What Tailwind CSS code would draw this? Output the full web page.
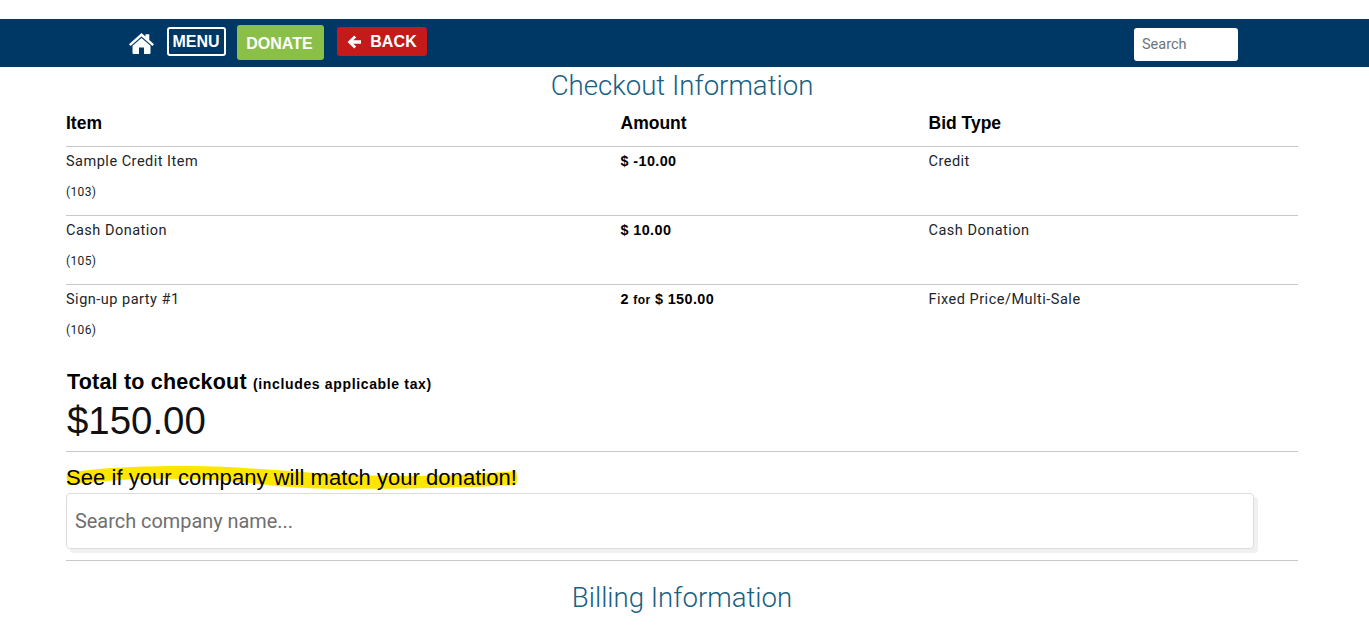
<!DOCTYPE html>
<html><head><meta charset="utf-8"><script src="https://cdn.jsdelivr.net/npm/@tailwindcss/browser@4"></script></head>
<body class="bg-white font-['Roboto',sans-serif] text-[#212529] overflow-hidden">
<div class="h-[630px] overflow-hidden pt-[19px]">
<nav class="h-[48px] bg-[#003865] flex items-center relative">
  <div class="flex items-center ml-[129px] font-['Liberation_Sans',sans-serif] font-bold text-white">
    <svg class="w-[25px] h-[21px]" viewBox="0 0 25 21" fill="#fff"><path d="M12.5 0 L16.5 3.6 V1.2 H20.3 V7 L25 11.2 L23.4 13 L12.5 3.4 L1.6 13 L0 11.2 Z"/><path d="M12.5 5 L21.5 12.8 V20 Q21.5 21 20.5 21 H15 V14.5 H10 V21 H4.5 Q3.5 21 3.5 20 V12.8 Z"/></svg>
    <span class="ml-[13px] w-[59px] h-[29px] -mt-[3px] border-2 border-white rounded-[3px] flex items-center justify-center text-[16px] pt-[1px] pr-[1px]">MENU</span>
    <span class="ml-[11px] w-[87px] h-[35px] -mt-[1px] bg-[#8bc048] rounded-[3px] flex items-center justify-center text-[16px] pt-[2px] pr-[2px]">DONATE</span>
    <span class="ml-[13px] w-[90px] h-[29px] bg-[#c41a1a] rounded-[3px] flex items-center justify-center text-[16px] gap-[9px] -mt-[3px] tracking-[0.1px]">
      <svg class="w-[14px] h-[14px]" viewBox="0 0 14 14" fill="#fff"><path d="M7.2 0.6 L9.2 2.6 L6.2 5.3 H14 V8.7 H6.2 L9.2 11.4 L7.2 13.4 L0.6 7 Z"/></svg>BACK</span>
  </div>
  <input placeholder="Search" class="absolute left-[1134px] top-[9px] w-[104px] h-[33px] bg-white rounded-[3px] px-[8px] text-[14.5px] placeholder:text-[#6c757d] outline-none">
</nav>
<main class="mx-[66px] w-[1232px]">
  <h2 class="text-center font-light text-[#176083] text-[27.6px] leading-[36px] mt-[1px]">Checkout Information</h2>
  <section>
    <div class="grid grid-cols-[554.5px_308px_1fr] h-[43px] pt-[7px] border-b border-[#c8c8c8] font-['Liberation_Sans',sans-serif] font-bold text-black text-[17.5px] leading-[24px]">
      <div>Item</div><div>Amount</div><div>Bid Type</div>
    </div>
    <div class="grid grid-cols-[554.5px_308px_1fr] h-[69px] pt-[5px] border-b border-[#c8c8c8] text-[14.5px] leading-[20px] tracking-[0.5px]">
      <div>Sample Credit Item<div class="text-[12px] mt-[10px] leading-[20px] tracking-[0.35px]">(103)</div></div>
      <div class="font-['Liberation_Sans',sans-serif] font-bold text-black text-[14.4px] tracking-[0.4px] -mt-[1px]">$ -10.00</div><div>Credit</div>
    </div>
    <div class="grid grid-cols-[554.5px_308px_1fr] h-[69px] pt-[5px] border-b border-[#c8c8c8] text-[14.5px] leading-[20px] tracking-[0.5px]">
      <div>Cash Donation<div class="text-[12px] mt-[10px] leading-[20px] tracking-[0.35px]">(105)</div></div>
      <div class="font-['Liberation_Sans',sans-serif] font-bold text-black text-[14.4px] tracking-[0.4px] -mt-[1px]">$ 10.00</div><div>Cash Donation</div>
    </div>
    <div class="grid grid-cols-[554.5px_308px_1fr] h-[69px] pt-[5px] text-[14.5px] leading-[20px] tracking-[0.5px]">
      <div>Sign-up party #1<div class="text-[12px] mt-[10px] leading-[20px] tracking-[0.35px]">(106)</div></div>
      <div class="font-['Liberation_Sans',sans-serif] font-bold text-black text-[14.4px] tracking-[0.4px] -mt-[1px]">2 <span class="text-[12px]">for</span> $ 150.00</div><div>Fixed Price/Multi-Sale</div>
    </div>
  </section>
  <section class="font-['Liberation_Sans',sans-serif] text-black pl-[1px] mt-[15px]">
    <div class="font-bold text-[21.5px] leading-[26px] tracking-[0.2px]">Total to checkout <span class="text-[14px] tracking-[0.65px]">(includes applicable tax)</span></div>
    <div class="text-[38.4px] leading-[46px] mt-[1px] text-[#111]">$150.00</div>
  </section>
  <div class="border-b border-[#c8c8c8] mt-[7px]"></div>
  <div class="relative mt-[13px] h-[26px] font-['Liberation_Sans',sans-serif] text-[22px] tracking-[0.05px] leading-[26px] text-black">
    <svg class="absolute left-0 top-0 w-[452px] h-[26px]" viewBox="0 0 452 26"><path d="M1 8 C30 3 70 1 120 1 C180 1 215 7 290 10 C350 12 400 11 450 6 Q452 13 450 20 C400 23 340 24 280 24 C230 24 205 20 165 16 C110 12 50 13 2 20 Q0 14 1 8 Z" fill="#ffe600"/></svg>
    <span class="relative">See if your company will match your donation!</span>
  </div>
  <input placeholder="Search company name..." class="block mt-[2px] w-[1188px] h-[56px] border border-[#dcdcdc] rounded-[4px] bg-white px-[8px] text-[19.9px] placeholder:text-[#6f6f6f] outline-none shadow-[4px_4px_0_#f0f0f0]">
  <div class="border-b border-[#c8c8c8] mt-[11px]"></div>
  <h2 class="text-center font-light text-[#176083] text-[27.6px] leading-[36px] mt-[19px]">Billing Information</h2>
</main>
</div>
</body></html>
